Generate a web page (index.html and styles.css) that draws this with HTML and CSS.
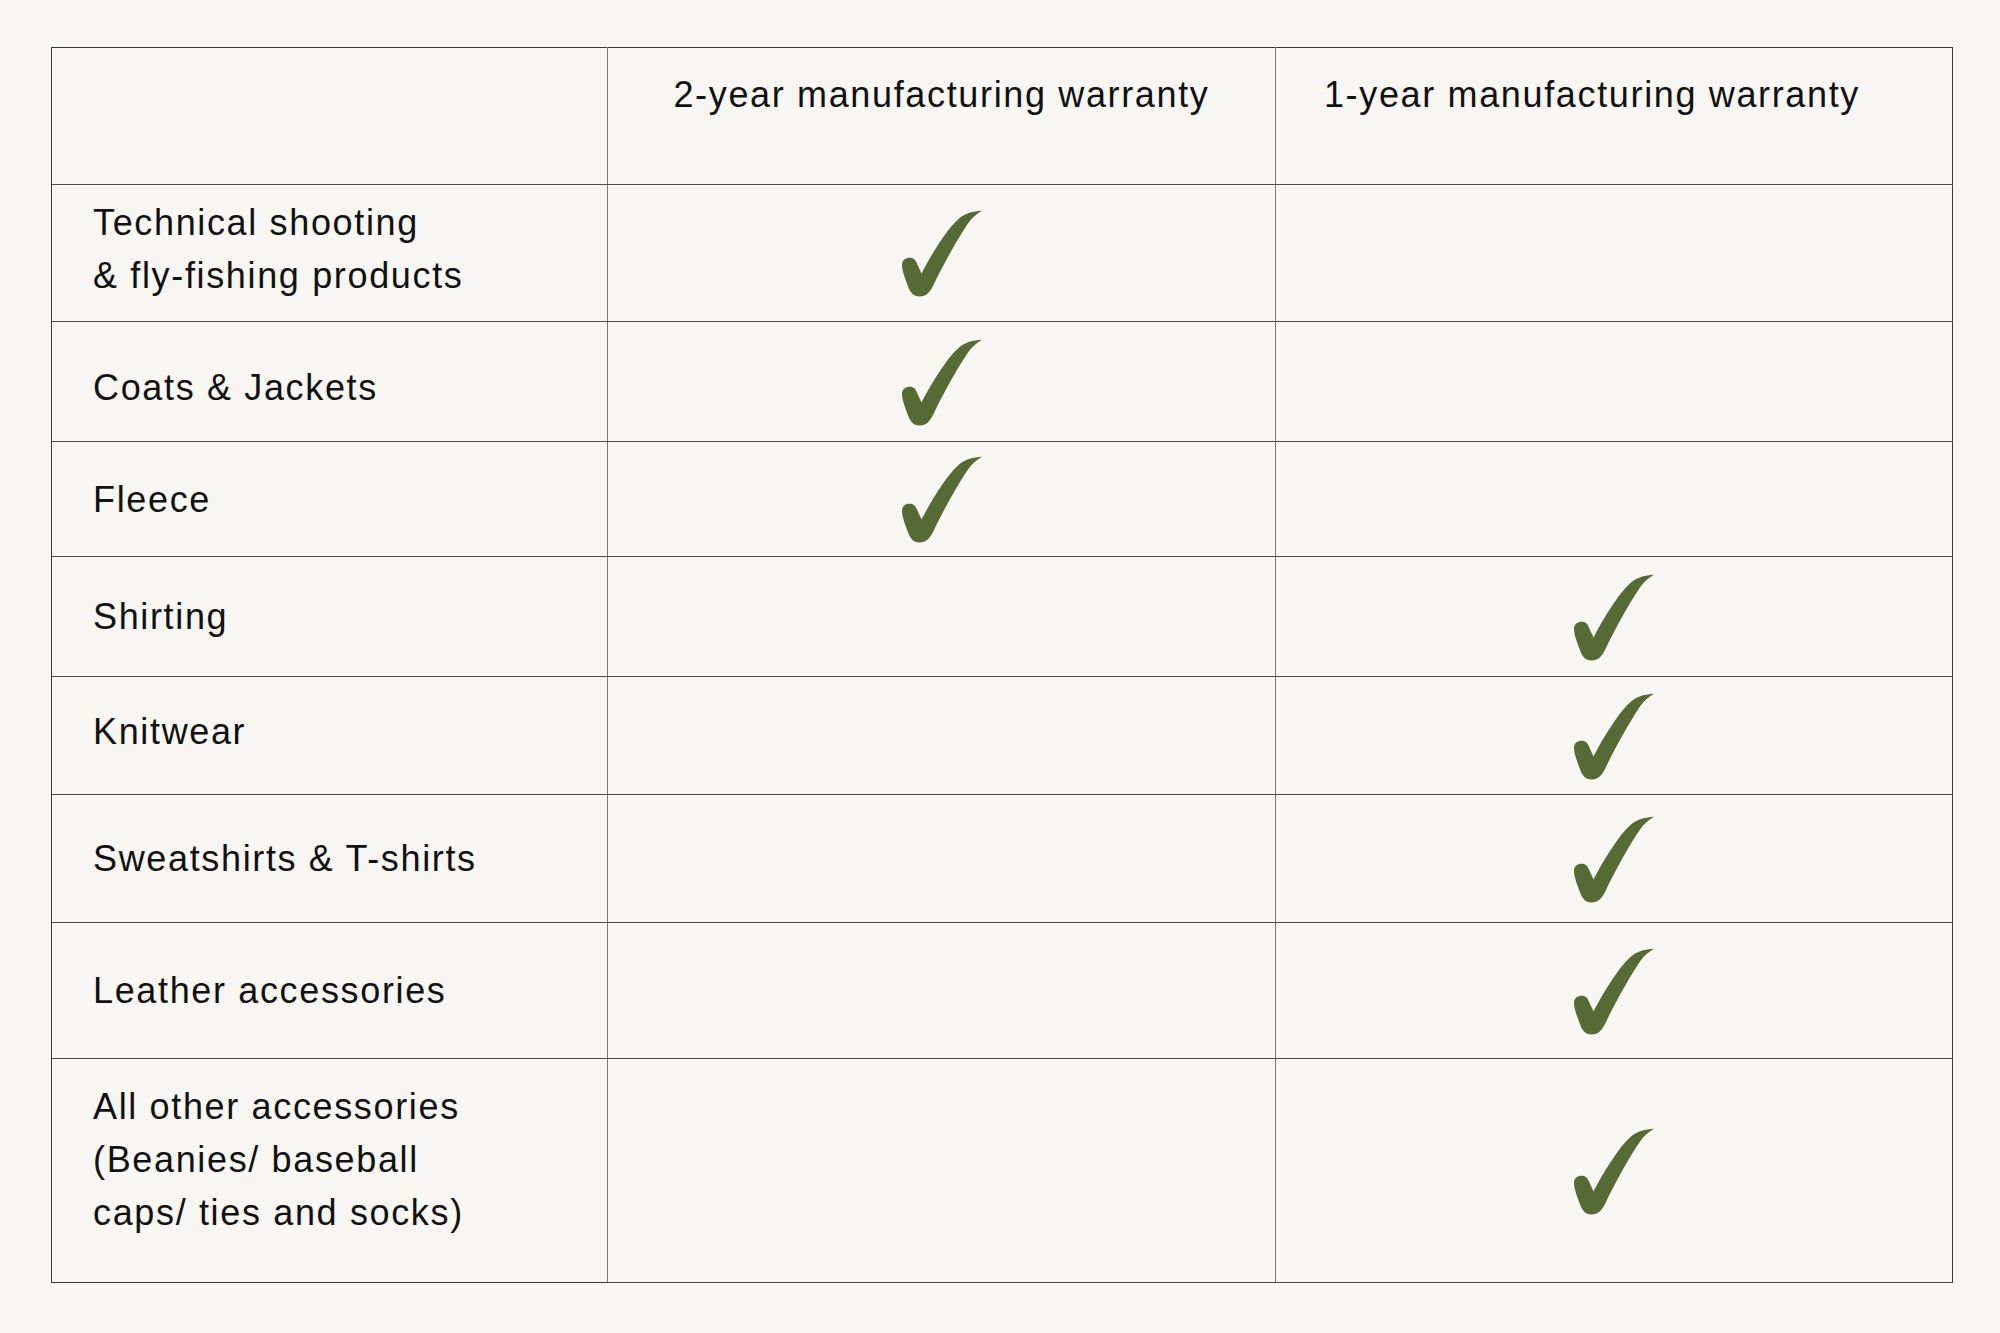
FILE: index.html
```html
<!DOCTYPE html>
<html lang="en">
<head>
<meta charset="utf-8">
<title>Warranty table</title>
<link rel="stylesheet" href="styles.css">
</head>
<body>
<svg class="defs" width="0" height="0" aria-hidden="true">
  <defs>
    <symbol id="tick" viewBox="0 0 82 88">
      <path d="M1 56 C1 51 4.5 48.8 8.8 48.8 C12.5 48.8 14.6 51 15.8 54.2 L20.5 64.5 C30 46 46 20 57 10.5 C63 5 70 2.5 81 1.8 C75.5 4.8 71.5 8.5 67.5 13.8 C57.5 28.5 43 54 32.5 76 C29 83 25.5 87.5 18.5 87.5 C12.5 87.5 9.2 83.5 7.2 77.8 C4.2 69.5 1 62 1 56 Z"/>
    </symbol>
  </defs>
</svg>
<main class="page">
  <table class="warranty">
    <colgroup>
      <col class="c-label">
      <col class="c-two">
      <col class="c-one">
    </colgroup>
    <thead>
      <tr class="row-head">
        <th class="label"></th>
        <th class="col">2-year manufacturing warranty</th>
        <th class="col col-last">1-year manufacturing warranty</th>
      </tr>
    </thead>
    <tbody>
      <tr class="r1">
        <td class="label shift-up-sm">Technical shooting<br>&amp; fly-fishing products</td>
        <td class="mark"><svg class="tick"><use href="#tick"/></svg></td>
        <td class="mark"></td>
      </tr>
      <tr class="r2">
        <td class="label shift-down">Coats &amp; Jackets</td>
        <td class="mark"><svg class="tick"><use href="#tick"/></svg></td>
        <td class="mark"></td>
      </tr>
      <tr class="r3">
        <td class="label">Fleece</td>
        <td class="mark"><svg class="tick"><use href="#tick"/></svg></td>
        <td class="mark"></td>
      </tr>
      <tr class="r4">
        <td class="label">Shirting</td>
        <td class="mark"></td>
        <td class="mark"><svg class="tick"><use href="#tick"/></svg></td>
      </tr>
      <tr class="r5">
        <td class="label shift-up-sm">Knitwear</td>
        <td class="mark"></td>
        <td class="mark"><svg class="tick"><use href="#tick"/></svg></td>
      </tr>
      <tr class="r6">
        <td class="label">Sweatshirts &amp; T-shirts</td>
        <td class="mark"></td>
        <td class="mark"><svg class="tick"><use href="#tick"/></svg></td>
      </tr>
      <tr class="r7">
        <td class="label">Leather accessories</td>
        <td class="mark"></td>
        <td class="mark"><svg class="tick"><use href="#tick"/></svg></td>
      </tr>
      <tr class="r8">
        <td class="label shift-up-lg">All other accessories<br>(Beanies/ baseball<br>caps/ ties and socks)</td>
        <td class="mark"></td>
        <td class="mark"><svg class="tick"><use href="#tick"/></svg></td>
      </tr>
    </tbody>
  </table>
</main>
</body>
</html>
```

FILE: styles.css
```css
html, body {
  margin: 0;
  padding: 0;
  background: #f7f6f2;
}

body {
  width: 2000px;
  height: 1333px;
  overflow: hidden;
  font-family: "Liberation Sans", Arial, sans-serif;
  color: #111111;
}

.defs {
  position: absolute;
  width: 0;
  height: 0;
  overflow: hidden;
}

.page {
  padding: 47px 0 0 51px;
}

.warranty {
  border-collapse: collapse;
  table-layout: fixed;
  width: 1901px;
  font-size: 36px;
  line-height: 53px;
  letter-spacing: 1.65px;
  border: 1px solid #3a3a3a;
}

.c-label { width: 556px; }
.c-two { width: 668px; }
.c-one { width: 677px; }

.warranty th,
.warranty td {
  padding: 0;
  border-top: 1px solid #4a4a4a;
  border-bottom: 1px solid #4a4a4a;
  border-left: 1px solid #7c7c7c;
  border-right: 1px solid #7c7c7c;
}

.warranty th.label,
.warranty td.label {
  border-left: 1px solid #3a3a3a;
}

.warranty th.col {
  font-weight: 400;
  text-align: center;
  vertical-align: top;
  padding-top: 20px;
}

.warranty th.col-last {
  padding-right: 44px;
}

.warranty th.col:last-child,
.warranty td.mark:last-child {
  border-right: 1px solid #3a3a3a;
}

.row-head th {
  border-top: 1px solid #3a3a3a;
}

.label {
  text-align: left;
  vertical-align: middle;
  padding: 0 20px 0 41px !important;
}

.shift-up-sm { padding-bottom: 8px !important; }
.shift-down { padding-top: 12px !important; }
.shift-up-lg { padding-bottom: 23px !important; }

.mark {
  text-align: center;
  vertical-align: middle;
}

.tick {
  display: block;
  margin: 0 auto;
  width: 82px;
  height: 88px;
  fill: #566a35;
}

.row-head { height: 137px; }
.r1 { height: 137px; }
.r2 { height: 120px; }
.r3 { height: 115px; }
.r4 { height: 120px; }
.r5 { height: 118px; }
.r6 { height: 128px; }
.r7 { height: 136px; }
.r8 { height: 224px; }

.r8 .label { border-bottom: 1px solid #3a3a3a; }
```
